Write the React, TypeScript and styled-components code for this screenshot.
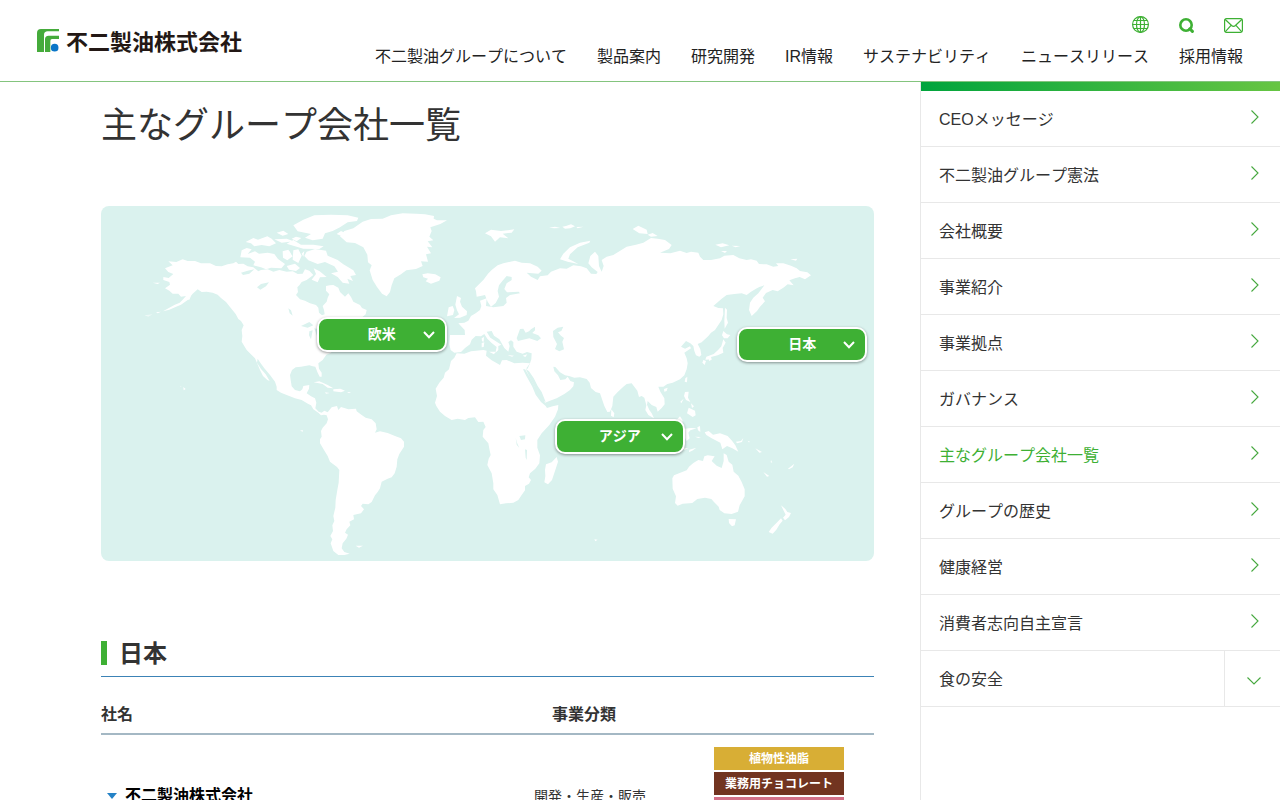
import React from "react";
import styled, { createGlobalStyle } from "styled-components";

const green = "#3eb034";

const GlobalStyle = createGlobalStyle`
  *, *::before, *::after { box-sizing: border-box; }
  body {
    margin: 0;
    background: #fff;
    color: #333;
    font-family: "Liberation Sans", "Noto Sans CJK JP", sans-serif;
    font-size: 16px;
    font-kerning: none;
    line-height: 24px;
  }
  a { color: inherit; text-decoration: none; }
  ul { list-style: none; margin: 0; padding: 0; }
  svg { display: block; }
`;

const Header = styled.header`
  display: flex;
  justify-content: space-between;
  align-items: flex-start;
  padding: 16px 37px 12px;
  border-bottom: 1px solid #84c47e;
`;

const Logo = styled.a`
  display: flex;
  align-items: center;
  gap: 7px;
  margin-top: 12px;
  color: #231815;
  font-family: "Noto Sans CJK JP", sans-serif;
  font-size: 22px;
  font-weight: 700;
  white-space: nowrap;
`;

const HeaderMenus = styled.div`
  display: flex;
  flex-direction: column;
  align-items: flex-end;
  gap: 12px;
`;

const Tools = styled.div`
  display: flex;
  align-items: flex-end;
  gap: 30px;
`;

const ToolButton = styled.button`
  padding: 0;
  border: 0;
  background: none;
  color: ${green};
  cursor: pointer;
`;

const GlobalNav = styled.nav`
  display: flex;
  gap: 30px;
  color: #222;
  white-space: nowrap;
`;

const Page = styled.div`
  display: grid;
  grid-template-columns: minmax(0, 1fr) 360px;
`;

const Main = styled.main`
  padding: 17px 46px 60px 101px;
`;

const Title = styled.h1`
  margin: 0 0 53px;
  font-size: 36px;
  line-height: 54px;
  font-weight: 400;
`;

const MapPanel = styled.div`
  position: relative;
  overflow: hidden;
  border-radius: 8px;
  background: #daf2ee;
  aspect-ratio: 773 / 355;

  > svg { width: 100%; height: 100%; }
`;

const RegionButton = styled.button<{ $left: number; $top: number }>`
  position: absolute;
  left: ${(p) => p.$left}%;
  top: ${(p) => p.$top}%;
  display: grid;
  grid-template-columns: 1fr auto 1fr;
  align-items: center;
  width: 130px;
  height: 35px;
  padding: 0 10px 2px;
  border: 2px solid #fff;
  border-radius: 10px;
  background: ${green};
  box-shadow: 0 1px 3px rgba(0, 0, 0, 0.4);
  color: #fff;
  font: inherit;
  font-size: 14px;
  font-weight: 700;
  font-kerning: none;
  cursor: pointer;

  span { grid-column: 2; }
  svg { justify-self: end; margin-top: 3px; }
`;

const SectionTitle = styled.h2`
  display: flex;
  gap: 12px;
  margin: 80px 0 0;
  padding-bottom: 9px;
  border-bottom: 1px solid #3c83b6;
  font-size: 24px;
  line-height: 26px;

  &::before {
    content: "";
    width: 6px;
    height: 24px;
    background: ${green};
  }
`;

const CompanyTable = styled.table`
  width: 100%;
  border-collapse: collapse;
  table-layout: fixed;
`;

const HeadCell = styled.th<{ $indent?: boolean }>`
  padding: 26px 0 6px ${(p) => (p.$indent ? "18px" : "0")};
  border-bottom: 2px solid #a4b8c4;
  text-align: left;
`;

const Cell = styled.td`
  padding: 12px 0;
  font-size: 14px;
  vertical-align: middle;
`;

const CompanyLink = styled.a`
  display: flex;
  align-items: center;
  gap: 8px;
  padding-left: 6px;
  color: #000;
  font-size: 16px;
  font-weight: 700;
`;

const Tags = styled.ul`
  display: grid;
  gap: 2px;
  width: 130px;
`;

const Tag = styled.li<{ $color: string }>`
  padding-top: 2px;
  background: ${(p) => p.$color};
  color: #fff;
  font-size: 12px;
  line-height: 21px;
  font-weight: 700;
  text-align: center;
`;

const Sidebar = styled.aside`
  border-left: 1px solid #e8e8e8;

  &::before {
    content: "";
    display: block;
    height: 9px;
    background: linear-gradient(90deg, #00a43c, #67c543);
  }
`;

const SideItem = styled.li`
  display: flex;
  height: 56px;
  border-bottom: 1px solid #e8e8e8;
`;

const SideLink = styled.a<{ $current?: boolean }>`
  flex: 1;
  display: flex;
  align-items: center;
  justify-content: space-between;
  padding: 2px 21px 0 18px;
  color: ${(p) => (p.$current ? green : "#333")};

  svg { margin-bottom: 5px; }
`;

const Expand = styled.button`
  display: grid;
  place-items: center;
  width: 56px;
  padding: 4px 0 0 3px;
  border: 0;
  border-left: 1px solid #e8e8e8;
  background: none;
  cursor: pointer;
`;

const LogoMark = () => (
  <svg width="22" height="23" viewBox="0 0 66 69" aria-hidden="true">
    <path fill="#45ab3b" d="M0 69V12Q0 0 12 0H66V7H32Q21 7 21 18V69Z" />
    <path fill="#45ab3b" d="M24 69V31Q24 20 35 20H66V30H45Q40 30 40 36V69Z" />
    <circle cx="53" cy="56" r="11.5" fill="#0a76c8" />
  </svg>
);

const GlobeIcon = () => (
  <svg width="17" height="17" viewBox="0 0 17 17" fill="none" stroke="currentColor" strokeWidth="1.2" aria-hidden="true">
    <circle cx="8.5" cy="8.5" r="7.9" />
    <ellipse cx="8.5" cy="8.5" rx="4" ry="7.9" />
    <path d="M8.5 .5v16M.5 8.5h16M1.8 4.5h13.4M1.8 12.5h13.4" />
  </svg>
);

const SearchIcon = () => (
  <svg width="15" height="15" viewBox="0 0 15 15" fill="none" stroke="currentColor" aria-hidden="true">
    <circle cx="7" cy="7" r="5.7" strokeWidth="2.6" />
    <path d="M10.8 10.8l2.6 2.6" strokeWidth="3" strokeLinecap="round" />
  </svg>
);

const MailIcon = () => (
  <svg width="19" height="15" viewBox="0 0 19 15" fill="none" stroke="currentColor" strokeWidth="1.2" aria-hidden="true">
    <rect x=".6" y=".6" width="17.8" height="13.8" rx="1.8" />
    <path d="M1 1.2l6.6 6.3q1.9 1.7 3.8 0L18 1.2M1.2 13.8l5.6-6.2M17.8 13.8l-5.6-6.2" />
  </svg>
);

const ChevronRight = () => (
  <svg width="8" height="14" viewBox="0 0 8 14" fill="none" stroke="#46a83e" strokeWidth="1.1" aria-hidden="true">
    <path d="M.5 .5L7 7L.5 13.5" />
  </svg>
);

const ChevronDown = () => (
  <svg width="14" height="8" viewBox="0 0 14 8" fill="none" stroke="#46a83e" strokeWidth="1.1" aria-hidden="true">
    <path d="M.5 .5L7 7L13.5 .5" />
  </svg>
);

const RegionChevron = () => (
  <svg width="12" height="8" viewBox="0 0 12 8" fill="none" stroke="#fff" strokeWidth="2" aria-hidden="true">
    <path d="M1 1L6 6.3L11 1" />
  </svg>
);

const WorldMap = () => (
  <svg viewBox="0 0 2319 1065" preserveAspectRatio="none" role="img" aria-label="世界地図">
    <g fill="#fff">
      {/* North and South America */}
      <path d="M192 187L215 178L202 166L226 168L245 160L260 165L282 165L300 172L327 172L345 180L362 181L380 175L397 172L405 167L412 174L427 173L440 181L457 184L472 196L480 192L500 190L517 197L535 192L557 197L575 196L590 204L605 203L612 190L625 194L637 207L628 214L617 222L602 228L595 238L589 244L591 258L585 267L597 280L612 284L627 292L645 297L652 305L654 320L663 328L671 325L669 312L665 300L677 287L680 275L685 265L675 254L675 240L686 238L697 237L712 245L717 258L732 272L742 262L750 273L757 287L777 297L783 306L797 312L794 325L780 337L750 345L735 385L700 425L690 440L676 446L665 462L652 472L654 488L662 500L662 512L656 512L650 500L643 482L635 481L625 478L612 480L600 482L584 484L573 492L567 507L569 522L572 541L582 552L597 556L604 550L607 540L625 537L624 548L617 562L630 571L642 577L646 590L643 607L653 617L662 620L670 614L680 619L692 604L708 600L712 612L720 603L742 610L765 608L767 616L782 627L794 635L812 640L824 652L827 670L822 680L837 676L860 681L882 690L900 697L909 707L909 722L895 744L889 760L887 782L881 802L872 814L860 818L842 827L837 847L830 858L822 868L812 888L802 895L785 893L780 900L789 910L780 922L757 927L759 940L745 947L748 958L737 970L732 980L741 986L736 998L725 1012L722 1027L730 1038L746 1043L730 1047L712 1047L697 1035L689 1012L694 1000L688 990L696 975L694 958L700 945L697 930L703 905L704 882L709 852L713 830L715 792L708 783L687 767L680 750L669 732L657 712L657 700L662 692L660 675L665 665L677 652L681 640L677 628L669 626L660 628L652 620L637 610L630 598L622 594L602 582L582 577L557 567L540 560L527 552L527 542L522 527L507 507L490 487L479 472L470 458L468 470L480 489L494 505L506 525L499 522L486 510L477 492L462 457L452 447L437 432L422 407L424 390L422 372L428 358L420 345L412 339L404 324L390 307L375 288L360 276L350 266L335 260L317 257L302 258L290 250L275 263L260 282L240 296L222 304L205 311L186 316L220 297L236 290L245 281L255 270L240 272L232 263L215 263L205 254L192 247L207 236L205 228L187 222L187 213L203 216L217 204L202 198Z" />
      {/* Europe and Asia */}
      <path d="M1047 387L1092 387L1091 372L1072 352L1090 350L1102 344L1110 330L1124 322L1137 312L1141 300L1137 284L1157 277L1155 300L1177 304L1207 300L1217 290L1215 276L1227 267L1257 262L1253 257L1218 259L1210 249L1217 232L1232 222L1232 213L1217 210L1204 225L1194 238L1190 255L1194 272L1184 291L1170 302L1160 287L1152 267L1142 269L1127 272L1125 256L1122 247L1147 222L1161 203L1172 192L1190 178L1207 172L1242 164L1262 170L1287 172L1310 182L1322 194L1312 203L1277 200L1290 212L1310 222L1317 211L1340 208L1350 197L1377 187L1397 188L1417 178L1440 181L1457 187L1470 203L1486 204L1490 198L1472 184L1462 172L1468 150L1482 137L1492 150L1494 180L1502 197L1508 180L1502 162L1517 152L1537 147L1577 122L1605 116L1627 110L1650 96L1670 98L1692 102L1712 117L1704 129L1677 140L1708 142L1737 134L1757 141L1770 137L1792 140L1797 152L1807 162L1830 162L1857 157L1870 149L1897 147L1915 157L1937 162L1950 160L1967 164L1974 174L1997 175L2017 182L2032 180L2025 172L2047 172L2070 179L2087 187L2097 195L2119 199L2130 208L2112 220L2096 213L2082 217L2065 223L2078 238L2060 235L2047 245L2030 256L2015 252L1995 261L1985 275L1992 286L1977 302L1968 315L1952 330L1944 312L1947 290L1957 275L1972 262L1990 238L1975 243L1965 248L1950 257L1937 267L1922 262L1900 264L1877 267L1862 278L1837 300L1852 306L1866 307L1867 325L1862 342L1842 372L1830 380L1822 390L1802 409L1790 414L1798 430L1801 447L1795 452L1785 448L1780 435L1777 420L1768 412L1755 405L1740 422L1752 428L1767 421L1770 427L1750 440L1757 457L1760 472L1757 490L1750 508L1737 520L1715 530L1699 534L1687 542L1672 542L1678 557L1690 577L1691 595L1682 606L1670 617L1666 603L1652 597L1640 585L1638 596L1645 612L1652 622L1659 637L1642 627L1633 612L1636 598L1630 575L1622 570L1614 573L1609 554L1592 532L1577 534L1567 542L1550 558L1537 572L1534 600L1527 617L1519 618L1510 600L1497 562L1484 558L1470 546L1466 530L1457 519L1437 514L1420 515L1404 510L1392 508L1377 499L1363 483L1357 482L1360 496L1371 508L1378 522L1393 520L1400 512L1408 525L1419 529L1417 541L1407 552L1390 564L1367 577L1345 585L1332 590L1325 575L1315 560L1300 540L1290 520L1270 486L1280 488L1287 472L1291 460L1292 442L1278 438L1265 443L1247 437L1237 422L1237 408L1230 403L1222 408L1226 420L1222 437L1210 426L1202 412L1195 400L1179 389L1172 375L1157 377L1168 395L1188 408L1201 416L1192 420L1192 432L1183 441L1187 423L1172 411L1159 398L1150 384L1140 391L1124 390L1112 401L1107 415L1092 426L1080 438L1060 440L1049 432L1045 415Z" />
      {/* Africa */}
      <path d="M1067 442L1090 443L1110 436L1147 432L1157 434L1155 449L1172 463L1197 477L1203 463L1217 462L1240 472L1265 470L1287 472L1274 490L1266 490L1276 510L1294 542L1304 566L1320 588L1334 600L1338 606L1355 601L1372 597L1371 610L1362 632L1345 657L1322 682L1309 702L1309 725L1317 748L1315 772L1303 788L1287 802L1283 814L1290 822L1284 833L1272 840L1272 853L1262 867L1252 882L1237 890L1215 892L1197 895L1189 867L1177 850L1177 832L1172 802L1159 777L1163 758L1169 747L1165 728L1162 712L1145 692L1147 672L1154 663L1147 647L1132 648L1122 634L1102 636L1092 642L1070 638L1052 642L1032 630L1017 617L1006 600L1002 590L1008 570L1004 548L1015 530L1028 515L1032 500L1044 490L1050 465L1060 455Z" />
      {/* Greenland */}
      <path d="M717 91L730 75L757 67L785 47L810 39L845 38L870 28L905 22L945 23L972 25L999 30L998 38L1008 43L1038 43L1018 54L988 64L992 75L985 92L997 103L980 106L994 124L978 122L990 142L975 145L981 167L960 166L965 180L945 189L916 193L900 205L880 217L872 238L867 258L857 271L843 263L828 243L815 222L806 193L812 178L801 169L799 146L787 124L762 111L737 109Z" />
      {/* Canadian Arctic islands */}
      <path d="M577 58L607 41L640 28L690 26L740 28L772 35L768 45L740 49L717 64L695 75L672 82L665 98L635 103L612 95L630 84L590 76Z" />
      <path d="M707 84L720 75L747 88L780 90L790 111L757 108L737 97Z" />
      <path d="M422 133L437 126L452 130L440 144L462 136L474 143L500 140L520 144L531 159L552 174L541 187L510 185L495 190L480 184L457 178L462 167L447 155L418 154Z" />
      <path d="M434 108L457 96L471 101L499 91L512 98L525 112L505 121L482 117L460 121L450 112Z" />
      <path d="M527 80L547 74L562 84L545 89ZM520 100L557 98L578 106L542 110ZM557 113L577 102L600 116L637 116L668 121L655 129L607 128ZM545 136L562 131L575 151L559 163L546 155ZM577 133L592 130L602 149L592 171L575 161ZM557 180L582 173L597 186L585 195L564 191ZM552 140L565 135L571 145L558 149Z" />
      <path d="M617 137L642 129L675 134L680 149L710 162L727 175L757 193L765 207L748 210L756 225L739 218L745 233L725 230L710 213L690 202L711 197L700 181L672 168L650 174L622 163L610 150Z" />
      <path d="M638 187L656 196L677 213L657 214L650 229L632 221L645 204ZM610 135L602 143L607 152ZM572 98L585 92L601 96L587 106Z" />
      {/* Atlantic islands and the north of Europe */}
      <path d="M964 205L980 202L1003 205L1019 214L1015 224L990 233L974 226L981 218L967 214Z" />
      <path d="M1068 270L1080 276L1077 287L1083 302L1098 316L1097 327L1077 335L1059 336L1074 325L1068 313L1063 296ZM1043 304L1055 300L1060 312L1056 327L1038 331Z" />
      <path d="M1152 82L1170 71L1200 75L1240 70L1232 80L1205 83L1222 97L1197 94L1182 107L1170 91Z" />
      <path d="M1377 160L1387 143L1407 124L1437 110L1468 104L1465 110L1430 124L1407 145L1402 158L1432 174L1400 167Z" />
      <path d="M1344 65L1362 62L1378 66L1360 67ZM1384 62L1395 60L1410 55L1422 61L1408 67L1392 68ZM1426 63L1448 62L1430 67ZM1595 69L1612 59L1637 71L1640 84L1615 82ZM1640 86L1655 81L1670 90L1650 92ZM1843 116L1865 112L1885 118L1860 124ZM1892 119L1918 120L1904 124ZM1860 135L1878 135L1872 141ZM2068 160L2089 158L2085 164Z" />
      {/* Mediterranean islands */}
      <path d="M1142 397L1149 393L1148 407L1143 406ZM1142 411L1150 409L1148 423L1142 424ZM1164 437L1184 437L1179 445ZM1220 447L1239 449L1233 452ZM1265 449L1279 445L1273 453Z" />
      {/* Sakhalin and Japan */}
      <path d="M1872 305L1878 311L1877 336L1881 350L1871 368L1870 345ZM1867 375L1878 385L1888 387L1880 397L1869 397L1863 388ZM1867 400L1874 410L1865 426L1867 440L1850 448L1830 453L1832 460L1813 461L1816 452L1838 444L1852 431L1861 421ZM1807 462L1815 465L1811 477L1804 470ZM1824 460L1833 459L1825 466Z" />
      {/* Islands of South-East Asia */}
      <path d="M1753 517L1759 512L1758 529L1751 527ZM1689 549L1700 545L1697 555L1690 557ZM1531 610L1540 622L1538 634L1530 629ZM1752 558L1763 557L1761 575L1768 588L1755 582L1749 570ZM1763 605L1782 614L1784 628L1775 633L1758 622ZM1770 592L1779 601L1773 606ZM1738 587L1748 578L1741 592Z" />
      <path d="M1660 640L1710 660L1737 631L1745 643L1738 680L1700 700ZM1752 668L1770 666L1787 667L1768 673L1762 680L1766 697L1757 705L1752 696ZM1789 664L1797 660L1798 678L1791 673ZM1765 731L1786 725L1776 733L1764 739ZM1740 726L1762 727L1750 732ZM1782 692L1800 693L1792 696Z" />
      <path d="M1811 679L1823 675L1836 686L1857 682L1880 690L1893 704L1903 718L1912 737L1894 727L1878 720L1864 730L1858 710L1832 697L1816 687ZM1905 707L1920 705L1927 696L1923 708L1908 712Z" />
      <path d="M1940 704L1948 708L1943 709ZM1963 727L1983 738L1975 740ZM1987 798L2005 810L1998 812ZM2061 788L2080 773L2075 784L2064 790ZM2010 762L2014 770L2009 769Z" />
      {/* Australia, Tasmania and New Zealand */}
      <path d="M1714 817L1719 808L1757 793L1764 782L1777 771L1792 762L1806 765L1810 751L1820 748L1841 751L1832 765L1847 779L1862 786L1868 765L1868 742L1877 747L1883 767L1894 776L1898 797L1912 809L1922 828L1931 850L1931 871L1916 898L1911 917L1892 924L1870 922L1856 912L1853 902L1839 888L1831 879L1812 875L1789 879L1774 891L1745 893L1730 899L1722 891L1725 871L1715 848Z" />
      <path d="M1883 939L1905 940L1901 958L1893 961L1884 951ZM2040 898L2053 909L2059 918L2070 921L2064 933L2052 943L2046 935L2054 926ZM2040 937L2045 944L2036 955L2026 971L2015 983L2003 978L2012 965L2030 947Z" />
      {/* Madagascar */}
      <path d="M1367 753L1371 767L1364 789L1353 822L1341 835L1330 829L1333 811L1332 791L1335 775L1352 769Z" />
      {/* Caribbean, Pacific and southern islands */}
      <path d="M638 529L655 526L680 537L697 547L680 545L665 534ZM697 550L718 548L732 554L720 559L697 556ZM672 559L686 561L675 563ZM738 558L750 559L744 562ZM597 674L605 672L606 677ZM247 543L254 549L248 553ZM764 1019L786 1019L774 1025ZM1480 1000L1490 1001L1483 1006ZM155 230L177 230L170 234ZM165 319L180 317L170 322ZM258 281L271 268L265 281Z" />
      <path opacity=".5" d="M237 539L242 541L239 543ZM130 328L155 325L142 332Z" />
    </g>
    {/* Inland seas and lakes */}
    <g fill="#daf2ee">
      <path d="M1247 397L1257 369L1267 368L1274 380L1284 376L1290 370L1302 362L1302 373L1294 381L1312 388L1320 397L1309 405L1285 397L1266 401L1251 405Z" />
      <path d="M1356 375L1370 365L1387 362L1381 375L1371 379L1380 389L1389 396L1384 407L1389 430L1375 436L1362 429L1368 414L1357 393Z" />
      <path d="M1274 488L1284 496L1298 516L1310 540L1322 558L1334 588L1326 584L1310 562L1298 538L1284 510Z" />
      <path d="M1255 690L1273 688L1272 700L1260 702ZM1244 695L1248 710L1255 726L1247 716ZM1272 730L1278 732L1277 762L1274 755Z" />
      <path d="M420 200L440 194L460 190L445 203L426 207ZM468 244L480 234L504 229L495 241L478 251ZM562 307L570 313L575 329L566 322ZM600 360L625 348L637 358L620 365ZM625 376L635 373L630 400L624 388ZM640 367L654 370L648 390Z" />
    </g>
  </svg>
);

const navItems = ["不二製油グループについて", "製品案内", "研究開発", "IR情報", "サステナビリティ", "ニュースリリース", "採用情報"];

const sideItems = [
  "CEOメッセージ",
  "不二製油グループ憲法",
  "会社概要",
  "事業紹介",
  "事業拠点",
  "ガバナンス",
  "主なグループ会社一覧",
  "グループの歴史",
  "健康経営",
  "消費者志向自主宣言",
];

const regions = [
  { name: "欧米", left: 27.9, top: 31.3 },
  { name: "日本", left: 82.3, top: 34.1 },
  { name: "アジア", left: 58.7, top: 60 },
];

const tags = [
  { name: "植物性油脂", color: "#d8ae35" },
  { name: "業務用チョコレート", color: "#723420" },
  { name: "乳化・発酵素材", color: "#d37088" },
  { name: "大豆加工素材", color: "#7fae4a" },
];

export default function App() {
  return (
    <>
      <GlobalStyle />
      <Header>
        <Logo href="#">
          <LogoMark />
          不二製油株式会社
        </Logo>
        <HeaderMenus>
          <Tools>
            <ToolButton aria-label="言語"><GlobeIcon /></ToolButton>
            <ToolButton aria-label="検索"><SearchIcon /></ToolButton>
            <ToolButton aria-label="お問い合わせ"><MailIcon /></ToolButton>
          </Tools>
          <GlobalNav>
            {navItems.map((item) => (
              <a href="#" key={item}>{item}</a>
            ))}
          </GlobalNav>
        </HeaderMenus>
      </Header>
      <Page>
        <Main>
          <Title>主なグループ会社一覧</Title>
          <MapPanel>
            <WorldMap />
            {regions.map((r) => (
              <RegionButton key={r.name} $left={r.left} $top={r.top}>
                <span>{r.name}</span>
                <RegionChevron />
              </RegionButton>
            ))}
          </MapPanel>
          <SectionTitle>日本</SectionTitle>
          <CompanyTable>
            <colgroup>
              <col />
              <col width="180" />
              <col width="160" />
            </colgroup>
            <thead>
              <tr>
                <HeadCell scope="col">社名</HeadCell>
                <HeadCell scope="col" colSpan={2} $indent>事業分類</HeadCell>
              </tr>
            </thead>
            <tbody>
              <tr>
                <Cell>
                  <CompanyLink href="#">
                    <svg width="10" height="6" viewBox="0 0 10 6" aria-hidden="true">
                      <path d="M0 0H10L5 6Z" fill="#2582c6" />
                    </svg>
                    不二製油株式会社
                  </CompanyLink>
                </Cell>
                <Cell>開発・生産・販売</Cell>
                <Cell>
                  <Tags>
                    {tags.map((t) => (
                      <Tag key={t.name} $color={t.color}>{t.name}</Tag>
                    ))}
                  </Tags>
                </Cell>
              </tr>
            </tbody>
          </CompanyTable>
        </Main>
        <Sidebar>
          <ul>
            {sideItems.map((item) => (
              <SideItem key={item}>
                <SideLink href="#" $current={item === "主なグループ会社一覧"}>
                  {item}
                  <ChevronRight />
                </SideLink>
              </SideItem>
            ))}
            <SideItem>
              <SideLink href="#">食の安全</SideLink>
              <Expand aria-label="食の安全のメニューを開く"><ChevronDown /></Expand>
            </SideItem>
          </ul>
        </Sidebar>
      </Page>
    </>
  );
}
